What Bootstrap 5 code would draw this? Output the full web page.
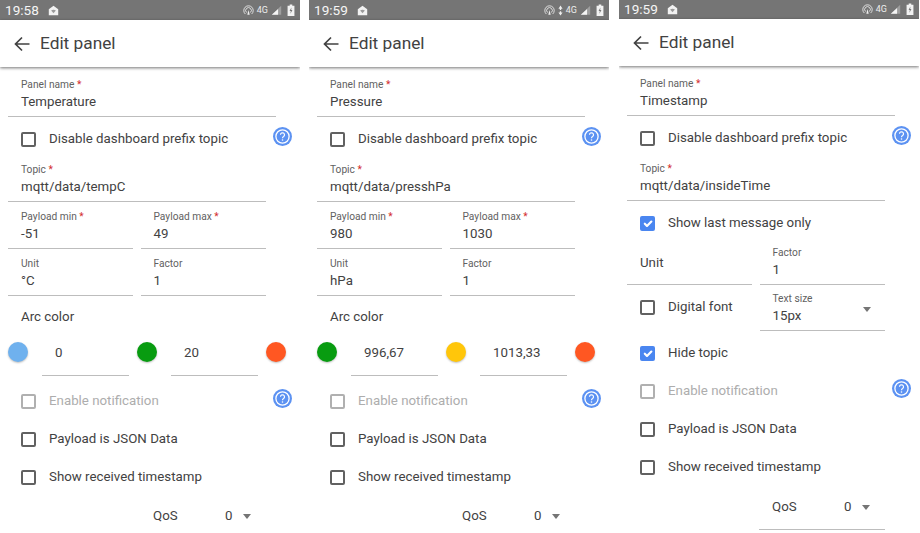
<!DOCTYPE html>
<html lang="en">
<head>
  <meta charset="UTF-8">
  <meta name="viewport" content="width=device-width, initial-scale=1">
  <title>Edit panel</title>
  <link href="https://cdn.jsdelivr.net/npm/bootstrap@5.3.0/dist/css/bootstrap.min.css" rel="stylesheet">
  <style>
    html, body { height: 533px; overflow: hidden; }
    body { background: #fff; font-family: Roboto, "Liberation Sans", sans-serif; color: #424242; font-size: 13.3px; }
    .phones { gap: 9px; width: 920px; }
    .phone { width: 300px; flex: none; height: 533px; overflow: hidden; }
    .phone-last { margin-left: 1px; margin-top: -1px; }
    .statusbar { height: 20px; background: #757575; color: #fff; padding: 0 5px; }
    .clock { font-size: 13.6px; line-height: 20px; color: #f5f5f5; width: 43px; }
    .net { font-size: 9px; line-height: 20px; color: #eee; }
    .net-icons { gap: 3px; }
    .batt-ico { margin-left: 2px; }
    .appbar { height: 47px; padding-left: 14px; box-shadow: 0 1px 3px rgba(0,0,0,.55); background: #fff; position: relative; }
    .appbar-title { font-size: 17.3px; font-weight: 400; margin: 0 0 0 10px; color: #424242; }
    .mfield { height: 47px; margin-left: 8px; padding-left: 13px; border-bottom: 1.5px solid #bdbdbd; flex: none; position: relative; }
    .mfield-label { font-size: 10.2px; line-height: 12px; padding-top: 9px; color: #616161; display: block; }
    .mfield-value { font-size: 13.3px; line-height: 18px; padding-top: 2px; display: block; }
    .req { color: #d32f2f; }
    .w-name { width: 268px; margin-top: 3px; }
    .w-topic { width: 258px; }
    .w-half { width: 125px; }
    .two-col { width: 266px; }
    .two-col .mfield + .mfield { margin-left: 7.5px; width: 125.5px; }
    .row-short .mfield { height: 46px; }
    .row-short .mfield-label { padding-top: 8px; }
    .opt-row { height: 38px; padding: 6px 0 0 21px; }
    .opt-row .form-check-input { width: 15px; height: 15px; margin: 0 13px 0 0; border: 2px solid #616161; border-radius: 2px; flex: none; background-color: #fff; }
    .opt-row .form-check-input:checked { background-color: #4a86f0; border-color: #4a86f0; background-size: 14px; }
    .opt-row .form-check-input:disabled { opacity: 1; border-color: #b0b0b0; }
    .opt-row label { font-size: 13.3px; }
    .opt-row .form-check-input:disabled + label { opacity: 1; color: #adadad; }
    .opt-half { width: 133px; flex: none; }
    .opt-half + .mfield { margin-left: 7.5px; width: 125.5px; }
    .help-ico { margin-left: auto; margin-right: 8px; margin-top: -6px; width: 19px; height: 19px; flex: none; }
    .arc-title { padding: 13px 0 0 21px; font-size: 13.3px; line-height: 16px; }
    .arc-row { height: 51px; padding: 0 0 0 8px; margin-bottom: 3px; }
    .dot { width: 20px; height: 20px; border-radius: 50%; flex: none; box-shadow: 0 1px 2px rgba(0,0,0,.25); margin-top: 3px; }
    .dot-blue { background: #6fb1ee; }
    .dot-green { background: #089c10; }
    .dot-orange { background: #ff5722; }
    .dot-yellow { background: #ffc60a; }
    .arc-input { width: 87px; height: 47px; margin: 4px 8px 0 14px; padding: 15px 0 0 13px; border-bottom: 1.5px solid #bdbdbd; line-height: 18px; flex: none; }
    .qos-row { height: 44px; padding: 2px 0 0 153px; }
    .qos-low { margin-top: 1px; }
    .qos-lbl { width: 72px; }
    .qos-val { width: 18px; }
    .caret-down { width: 0; height: 0; border-left: 4.5px solid transparent; border-right: 4.5px solid transparent; border-top: 5px solid #757575; display: inline-block; }
    .unit-plain { line-height: 48px; }
    .select-caret { position: absolute; right: 14px; top: 22px; }
    .qos-under { width: 126px; margin-left: 140px; height: 2px; border-bottom: 1.5px solid #bdbdbd; }
    .back-ico { width: 16px; height: 16px; flex: none; }
  </style>
</head>
<body>
  <svg width="0" height="0" class="position-absolute">
    <symbol id="i-home" viewBox="0 0 14 14"><path d="M7 1 L13 5.5 V13 H1 V5.5 Z" fill="#f2f2f2"/><path d="M4 7 Q7 5 10 7 L7 10.5 Z" fill="#9a9a9a"/></symbol>
    <symbol id="i-air" viewBox="0 0 14 14"><g fill="none" stroke="#eee" stroke-width="1.1"><path d="M3 11.5 A6 6 0 1 1 11 11.5"/><path d="M4.6 9.6 A3.6 3.6 0 1 1 9.4 9.6"/></g><path d="M5.5 12.5 L7 6.5 L8.5 12.5 Z" fill="#eee"/></symbol>
    <symbol id="i-signal" viewBox="0 0 14 14"><path d="M1 12.5 L13 1 V12.5 Z" fill="#9e9e9e"/><path d="M1 12.5 L9 5 V12.5 Z" fill="#f5f5f5"/></symbol>
    <symbol id="i-batt" viewBox="0 0 9 14"><path d="M3 0.5 H6 V2 H8.5 V14 H0.5 V2 H3 Z" fill="#f2f2f2"/><path d="M5 4 L2.8 8.2 H4.3 L3.8 11.5 L6.2 7 H4.7 Z" fill="#757575"/></symbol>
    <symbol id="i-arrows" viewBox="0 0 6 12"><path d="M3 0 L5.5 4 H3.8 V5.5 H2.2 V4 H0.5 Z M2.2 7 H3.8 V8.5 H5.5 L3 12 L0.5 8.5 H2.2 Z" fill="#eee"/></symbol>
    <symbol id="i-help" viewBox="0 0 19 19"><circle cx="9.5" cy="9.5" r="9.5" fill="#5c92f2"/><circle cx="9.5" cy="9.5" r="6.6" fill="none" stroke="#fff" stroke-width="1.3"/><path d="M7.5 7.8 A2 2 0 1 1 10.6 9.5 C9.8 10 9.5 10.4 9.5 11.3" fill="none" stroke="#fff" stroke-width="1.2"/><circle cx="9.5" cy="13" r=".8" fill="#fff"/></symbol>
    <symbol id="i-back" viewBox="0 0 16 16"><path d="M15.5 8 H2 M8 1.5 L1.5 8 L8 14.5" fill="none" stroke="#424242" stroke-width="1.7"/></symbol>
  </svg>

  <div class="phones d-flex">
    <!-- Temperature -->
    <div class="phone">
      <div class="statusbar d-flex align-items-center">
        <span class="clock">19:58</span>
        <svg width="11" height="11"><use href="#i-home"/></svg>
        <div class="ms-auto d-flex align-items-center net-icons">
          <svg width="11" height="11"><use href="#i-air"/></svg>
          <span class="net">4G</span>
          <svg width="11" height="11"><use href="#i-signal"/></svg>
          <svg width="8" height="12" class="batt-ico"><use href="#i-batt"/></svg>
        </div>
      </div>
      <div class="appbar d-flex align-items-center">
        <svg class="back-ico"><use href="#i-back"/></svg>
        <h1 class="appbar-title">Edit panel</h1>
      </div>
      <div class="mfield w-name"><span class="mfield-label">Panel name <span class="req">*</span></span><span class="mfield-value">Temperature</span></div>
      <div class="opt-row d-flex align-items-center"><input type="checkbox" class="form-check-input"><label>Disable dashboard prefix topic</label><svg class="help-ico"><use href="#i-help"/></svg></div>
      <div class="mfield w-topic"><span class="mfield-label">Topic <span class="req">*</span></span><span class="mfield-value">mqtt/data/tempC</span></div>
      <div class="two-col d-flex">
        <div class="mfield w-half"><span class="mfield-label">Payload min <span class="req">*</span></span><span class="mfield-value">-51</span></div>
        <div class="mfield w-half"><span class="mfield-label">Payload max <span class="req">*</span></span><span class="mfield-value">49</span></div>
      </div>
      <div class="two-col d-flex">
        <div class="mfield w-half"><span class="mfield-label">Unit</span><span class="mfield-value">°C</span></div>
        <div class="mfield w-half"><span class="mfield-label">Factor</span><span class="mfield-value">1</span></div>
      </div>
      <div class="arc-title">Arc color</div>
      <div class="arc-row d-flex align-items-center">
        <span class="dot dot-blue"></span><div class="arc-input">0</div>
        <span class="dot dot-green"></span><div class="arc-input">20</div>
        <span class="dot dot-orange"></span>
      </div>
      <div class="opt-row d-flex align-items-center"><input type="checkbox" class="form-check-input" disabled><label>Enable notification</label><svg class="help-ico"><use href="#i-help"/></svg></div>
      <div class="opt-row d-flex align-items-center"><input type="checkbox" class="form-check-input"><label>Payload is JSON Data</label></div>
      <div class="opt-row d-flex align-items-center"><input type="checkbox" class="form-check-input"><label>Show received timestamp</label></div>
      <div class="qos-row d-flex align-items-center"><span class="qos-lbl">QoS</span><span class="qos-val">0</span><span class="caret-down"></span></div>
    </div>

    <!-- Pressure -->
    <div class="phone">
      <div class="statusbar d-flex align-items-center">
        <span class="clock">19:59</span>
        <svg width="11" height="11"><use href="#i-home"/></svg>
        <div class="ms-auto d-flex align-items-center net-icons">
          <svg width="11" height="11"><use href="#i-air"/></svg>
          <svg width="5" height="11"><use href="#i-arrows"/></svg>
          <span class="net">4G</span>
          <svg width="11" height="11"><use href="#i-signal"/></svg>
          <svg width="8" height="12" class="batt-ico"><use href="#i-batt"/></svg>
        </div>
      </div>
      <div class="appbar d-flex align-items-center">
        <svg class="back-ico"><use href="#i-back"/></svg>
        <h1 class="appbar-title">Edit panel</h1>
      </div>
      <div class="mfield w-name"><span class="mfield-label">Panel name <span class="req">*</span></span><span class="mfield-value">Pressure</span></div>
      <div class="opt-row d-flex align-items-center"><input type="checkbox" class="form-check-input"><label>Disable dashboard prefix topic</label><svg class="help-ico"><use href="#i-help"/></svg></div>
      <div class="mfield w-topic"><span class="mfield-label">Topic <span class="req">*</span></span><span class="mfield-value">mqtt/data/presshPa</span></div>
      <div class="two-col d-flex">
        <div class="mfield w-half"><span class="mfield-label">Payload min <span class="req">*</span></span><span class="mfield-value">980</span></div>
        <div class="mfield w-half"><span class="mfield-label">Payload max <span class="req">*</span></span><span class="mfield-value">1030</span></div>
      </div>
      <div class="two-col d-flex">
        <div class="mfield w-half"><span class="mfield-label">Unit</span><span class="mfield-value">hPa</span></div>
        <div class="mfield w-half"><span class="mfield-label">Factor</span><span class="mfield-value">1</span></div>
      </div>
      <div class="arc-title">Arc color</div>
      <div class="arc-row d-flex align-items-center">
        <span class="dot dot-green"></span><div class="arc-input">996,67</div>
        <span class="dot dot-yellow"></span><div class="arc-input">1013,33</div>
        <span class="dot dot-orange"></span>
      </div>
      <div class="opt-row d-flex align-items-center"><input type="checkbox" class="form-check-input" disabled><label>Enable notification</label><svg class="help-ico"><use href="#i-help"/></svg></div>
      <div class="opt-row d-flex align-items-center"><input type="checkbox" class="form-check-input"><label>Payload is JSON Data</label></div>
      <div class="opt-row d-flex align-items-center"><input type="checkbox" class="form-check-input"><label>Show received timestamp</label></div>
      <div class="qos-row d-flex align-items-center"><span class="qos-lbl">QoS</span><span class="qos-val">0</span><span class="caret-down"></span></div>
    </div>

    <!-- Timestamp -->
    <div class="phone phone-last">
      <div class="statusbar d-flex align-items-center">
        <span class="clock">19:59</span>
        <svg width="11" height="11"><use href="#i-home"/></svg>
        <div class="ms-auto d-flex align-items-center net-icons">
          <svg width="11" height="11"><use href="#i-air"/></svg>
          <span class="net">4G</span>
          <svg width="11" height="11"><use href="#i-signal"/></svg>
          <svg width="8" height="12" class="batt-ico"><use href="#i-batt"/></svg>
        </div>
      </div>
      <div class="appbar d-flex align-items-center">
        <svg class="back-ico"><use href="#i-back"/></svg>
        <h1 class="appbar-title">Edit panel</h1>
      </div>
      <div class="mfield w-name"><span class="mfield-label">Panel name <span class="req">*</span></span><span class="mfield-value">Timestamp</span></div>
      <div class="opt-row d-flex align-items-center"><input type="checkbox" class="form-check-input"><label>Disable dashboard prefix topic</label><svg class="help-ico"><use href="#i-help"/></svg></div>
      <div class="mfield w-topic"><span class="mfield-label">Topic <span class="req">*</span></span><span class="mfield-value">mqtt/data/insideTime</span></div>
      <div class="opt-row d-flex align-items-center"><input type="checkbox" class="form-check-input" checked><label>Show last message only</label></div>
      <div class="two-col d-flex row-short">
        <div class="mfield w-half"><span class="unit-plain">Unit</span></div>
        <div class="mfield w-half"><span class="mfield-label">Factor</span><span class="mfield-value">1</span></div>
      </div>
      <div class="two-col d-flex row-short">
        <div class="opt-row d-flex align-items-center opt-half"><input type="checkbox" class="form-check-input"><label>Digital font</label></div>
        <div class="mfield w-half"><span class="mfield-label">Text size</span><span class="mfield-value">15px</span><span class="caret-down select-caret"></span></div>
      </div>
      <div class="opt-row d-flex align-items-center"><input type="checkbox" class="form-check-input" checked><label>Hide topic</label></div>
      <div class="opt-row d-flex align-items-center"><input type="checkbox" class="form-check-input" disabled><label>Enable notification</label><svg class="help-ico"><use href="#i-help"/></svg></div>
      <div class="opt-row d-flex align-items-center"><input type="checkbox" class="form-check-input"><label>Payload is JSON Data</label></div>
      <div class="opt-row d-flex align-items-center"><input type="checkbox" class="form-check-input"><label>Show received timestamp</label></div>
      <div class="qos-row qos-low d-flex align-items-center"><span class="qos-lbl">QoS</span><span class="qos-val">0</span><span class="caret-down"></span></div>
      <div class="qos-under"></div>
    </div>
  </div>
  <script src="https://cdn.jsdelivr.net/npm/bootstrap@5.3.0/dist/js/bootstrap.bundle.min.js"></script>
</body>
</html>
